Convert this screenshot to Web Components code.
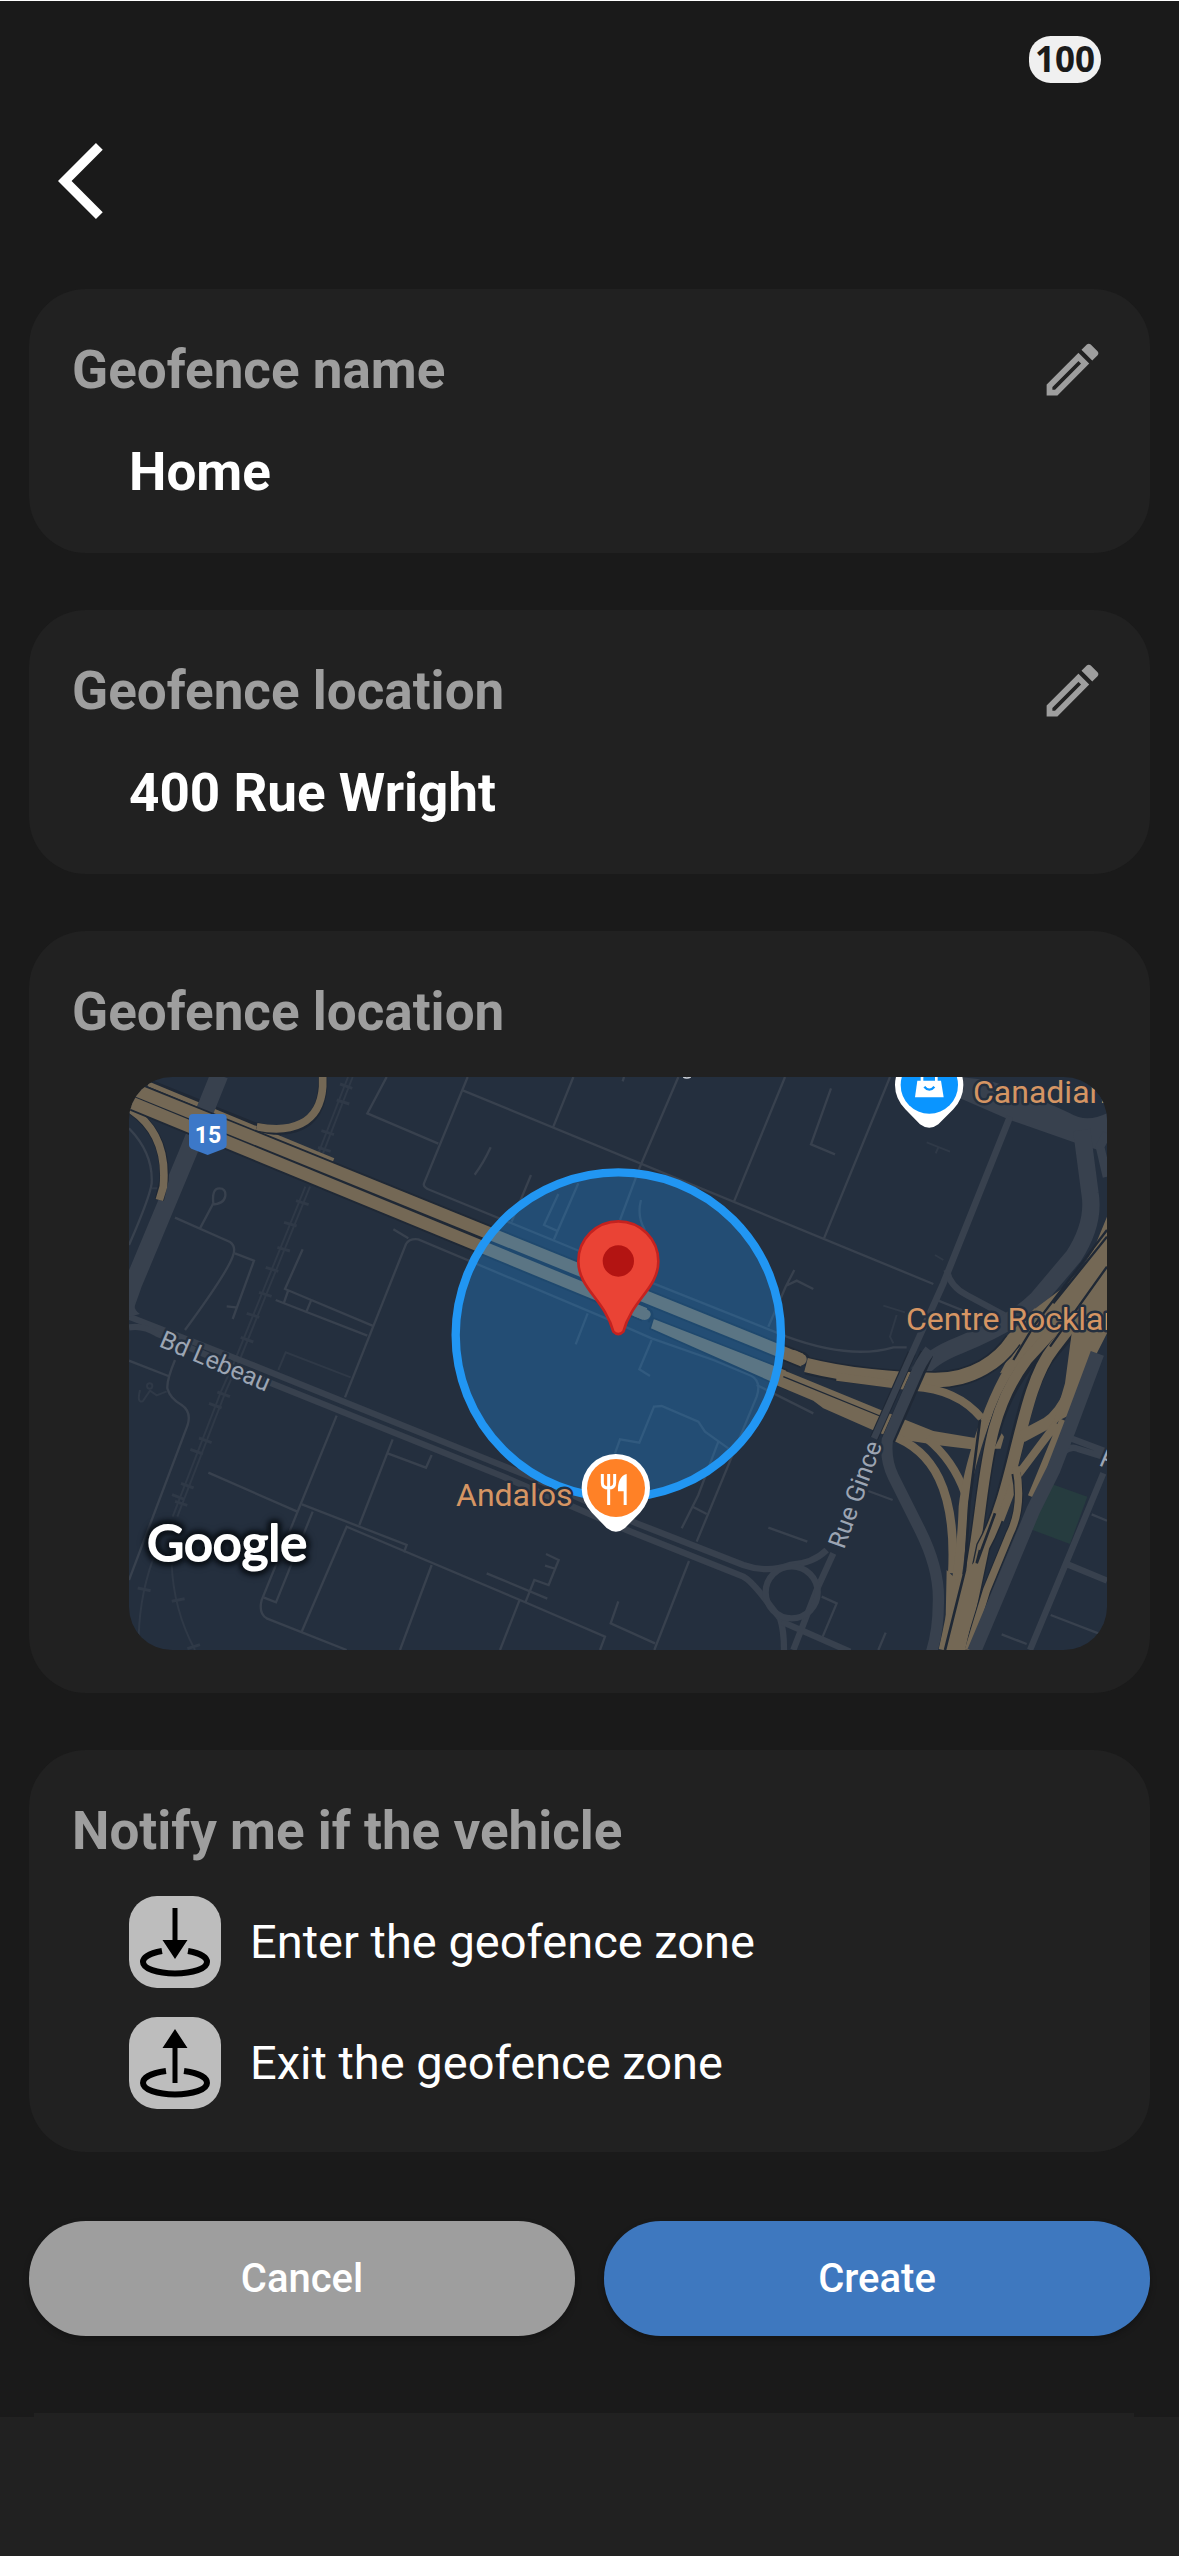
<!DOCTYPE html>
<html lang="en">
<head>
<meta charset="utf-8">
<meta name="viewport" content="width=device-width, initial-scale=1">
<title>Geofence</title>
<style>
  body {
    margin: 0;
    background: #1a1a1a;
    color: #fff;
    font-family: Roboto, "Liberation Sans", sans-serif;
  }
</style>
</head>
<body>
<geofence-page>
  <status-bar slot="status">100</status-bar>
  <back-button slot="header"></back-button>

  <info-card heading="Geofence name" editable>
    <card-value>Home</card-value>
  </info-card>
  <info-card heading="Geofence location" editable>
    <card-value>400 Rue Wright</card-value>
  </info-card>
  <info-card heading="Geofence location">
    <geofence-map></geofence-map>
  </info-card>
  <info-card heading="Notify me if the vehicle">
    <notify-option type="enter">Enter the geofence zone</notify-option>
    <notify-option type="exit">Exit the geofence zone</notify-option>
  </info-card>

  <action-button slot="actions">Cancel</action-button>
  <action-button slot="actions" primary>Create</action-button>
</geofence-page>

<script>
function define(name, html, setup) {
  const template = document.createElement('template');
  template.innerHTML = html;
  customElements.define(name, class extends HTMLElement {
    constructor() {
      super();
      this.attachShadow({mode: 'open'}).appendChild(template.content.cloneNode(true));
    }
    connectedCallback() {
      if (setup) setup(this, this.shadowRoot);
    }
  });
}

define('geofence-page', `
  <style>
    :host {
      display: flex;
      flex-direction: column;
      box-sizing: border-box;
      min-height: 100vh;
      border-top: 1px solid #fff;
    }
    header { padding: 52px 58px 62px; }
    main {
      display: flex;
      flex-direction: column;
      gap: 57px;
      padding: 0 29px;
    }
    .actions {
      display: flex;
      gap: 29px;
      padding: 69px 29px 77px;
    }
    footer {
      flex: 1;
      display: flex;
      flex-direction: column;
      min-height: 80px;
    }
    .lip { height: 4px; margin: 0 45px 0 34px; background: #212121; }
    .bar { flex: 1; background: #212121; }
  </style>
  <slot name="status"></slot>
  <header><slot name="header"></slot></header>
  <main><slot></slot></main>
  <div class="actions"><slot name="actions"></slot></div>
  <footer><div class="lip"></div><div class="bar"></div></footer>
`);

define('status-bar', `
  <style>
    :host {
      display: flex;
      justify-content: flex-end;
      padding: 35px 78px 0;
    }
    .battery {
      width: 72px;
      height: 47px;
      border-radius: 22px 24px 24px 22px;
      background: #f0f0f0;
      color: #1a1a1a;
      font: 700 35px/46px "Noto Sans", sans-serif;
      text-align: center;
    }
  </style>
  <div class="battery"><slot></slot></div>
`);

define('back-button', `
  <style>
    :host { display: block; }
    button { display: block; padding: 0; border: 0; background: none; color: inherit; }
    svg { display: block; width: 92px; height: 92px; fill: currentColor; }
  </style>
  <button aria-label="Back">
    <svg viewBox="0 0 24 24"><path d="M11.67 3.87L9.9 2.1 0 12l9.9 9.9 1.77-1.77L3.54 12z"/></svg>
  </button>
`);

define('info-card', `
  <style>
    :host {
      display: block;
      padding: 43px;
      border-radius: 57px;
      background: #212121;
    }
    .head {
      display: flex;
      align-items: center;
      justify-content: space-between;
      height: 75px;
      color: #9e9e9e;
    }
    h2 { margin: 0; font-size: 53px; line-height: 74px; font-weight: 700; }
    button { padding: 0; border: 0; background: none; color: inherit; }
    button[hidden] { display: none; }
    svg { display: block; width: 69px; height: 69px; fill: currentColor; }
    .content {
      display: flex;
      flex-direction: column;
      gap: 29px;
      padding: 28px 0 0 57px;
    }
  </style>
  <div class="head">
    <h2></h2>
    <button aria-label="Edit" hidden>
      <svg viewBox="0 0 24 24"><path d="M14.06 9.02l.92.92L5.92 19H5v-.92l9.06-9.06M17.66 3c-.25 0-.51.1-.7.29l-1.83 1.83 3.75 3.75 1.83-1.83c.39-.39.39-1.02 0-1.41l-2.34-2.34c-.2-.2-.45-.29-.71-.29zm-3.6 3.19L3 17.25V21h3.75L17.81 9.94l-3.75-3.75z"/></svg>
    </button>
  </div>
  <div class="content"><slot></slot></div>
`, (host, root) => {
  root.querySelector('h2').textContent = host.getAttribute('heading');
  root.querySelector('button').hidden = !host.hasAttribute('editable');
});

define('card-value', `
  <style>
    :host { display: block; height: 75px; font-size: 53px; line-height: 74px; font-weight: 700; }
  </style>
  <slot></slot>
`);

define('notify-option', `
  <style>
    :host { display: block; }
    button {
      display: flex;
      align-items: center;
      gap: 29px;
      padding: 0;
      border: 0;
      background: none;
      color: inherit;
      font: 400 47px/60px Roboto, "Liberation Sans", sans-serif;
    }
    svg { width: 92px; height: 92px; border-radius: 28px; background: #bdbdbd; }
    .exit, :host([type="exit"]) .enter { display: none; }
    :host([type="exit"]) .exit { display: inline; }
    .ring { fill: none; stroke: #000; stroke-width: 6; }
  </style>
  <button>
    <svg viewBox="0 0 92 92">
      <g class="enter">
        <path d="M43.5 12h5v32h10L46 63 33.5 44h10z"/>
        <path class="ring" d="M33 55C22 57 14 61 14 66C14 72.5 28 77.5 46 77.5S78 72.5 78 66C78 61 70 57 59 55"/>
      </g>
      <g class="exit">
        <path d="M46 12l12.5 19h-10v35h-5V31h-10z"/>
        <path class="ring" d="M37 54C23 56 14 60 14 66C14 72.5 28 77.5 46 77.5S78 72.5 78 66C78 60 69 56 55 54"/>
      </g>
    </svg>
    <span><slot></slot></span>
  </button>
`);

define('action-button', `
  <style>
    :host { display: block; flex: 1; }
    button {
      width: 100%;
      height: 115px;
      border: 0;
      border-radius: 57px;
      background: #9e9e9e;
      color: #fff;
      font: 500 40px/48px Roboto, "Liberation Sans", sans-serif;
      box-shadow: 0 3px 6px rgba(0, 0, 0, .25);
    }
    :host([primary]) button { background: #3e78bf; }
  </style>
  <button><slot></slot></button>
`);

define('geofence-map', `
  <style>
    :host {
      display: block;
      height: 573px;
      border-radius: 43px;
      overflow: hidden;
      background: #242f3e;
    }
    svg { display: block; width: 100%; height: 100%; }
    path, circle { fill: none; }
    .road { stroke: #38414e; }
    .minor { stroke: #38414e; stroke-width: 7; }
    .faint { stroke: #2f3947; stroke-width: 6; }
    .edge { stroke: #1f2835; }
    .highway { stroke: #746855; }
    .land { fill: #38414e; }
    .tan { fill: #746855; stroke: #1f2835; stroke-width: 5; }
    .white { fill: #fff; }
    text { font-family: Roboto, "Liberation Sans", sans-serif; paint-order: stroke; stroke: #242f3e; stroke-width: 5; stroke-linejoin: round; }
    .poi { font-size: 32px; fill: #d59563; }
    .street { font-size: 25px; fill: #9ca5b3; }
    .shield { font-size: 23px; font-weight: 700; fill: #fff; stroke: none; }
    .brand {
      font-family: Lato, sans-serif;
      font-size: 51px;
      font-weight: 400;
      fill: #fff;
      stroke: #fff;
      stroke-width: 2;
      filter: drop-shadow(0 0 2px #0e141b) drop-shadow(0 0 2px #0e141b) drop-shadow(0 0 2px #0e141b) drop-shadow(0 0 2px #0e141b);
    }
  </style>
  <svg viewBox="0 0 978 573" preserveAspectRatio="xMidYMid slice">
    <!-- streets are drawn on a grid three times finer than the labels -->
    <g transform="translate(-9 -7) scale(.333333)">
      <path style="fill:#263c3f" d="M2795 1242L2902 1280L2850 1422L2732 1378z"/>

      <!-- railway -->
      <path class="faint" d="M684 21L595 250M698 21L609 250M556 350L345 870L305 960L158 1340M570 350L359 870L319 960L172 1340M110 1440Q60 1560 56 1700M155 1480Q160 1620 225 1740"/>
      <path class="faint" style="stroke-width:9" d="M660 42L697 55M650 90L688 102M604 182L642 194M594 232L632 244M528 392L566 404M492 457L530 468M472 532L510 543M437 592L475 604M417 667L455 679M380 730L418 742M362 802L400 816M292 966L330 980M267 1000L305 1014M237 1104L275 1118M211 1138L249 1152M183 1240L221 1254M156 1274L194 1288M165 1294L202 1306M53 1554L92 1562M155 1594L194 1586M202 1736L240 1724"/>
      <path class="faint" d="M475 900L497 847L692 922M60 960Q50 1000 68 994L90 962L110 976L140 964M2290 707L2355 727M2330 735L2310 800L2320 820M2420 217L2490 245M2455 232L2447 250M2445 555L2470 570M95 355L120 355"/>
      <circle class="faint" cx="89" cy="948" r="8"/>

      <!-- small streets -->
      <path class="minor" d="M800 21L742 130L955 221M1043 21L912 340Q908 352 930 360L1400 552M1030 62L2440 642M1360 21L1300 170M1112 232Q1090 280 1064 314M1233 315L1175 455M1315 372L1272 465L1310 482M1375 340L1302 508"/>
      <path class="minor" d="M820 478L865 505M675 982L858 522Q868 505 895 508L1465 748L1595 805L1780 870L1895 918Q1925 935 1910 980L1730 1415M1403 730L1367 823M757 767L495 657L548 538M467 690L742 797M505 660L492 698M573 692L558 728"/>
      <path class="minor" d="M240 475L280 400Q275 355 298 355Q318 355 316 378Q312 403 275 403M165 443L330 516Q350 530 338 560Q320 610 195 780M345 550L402 572L338 747M320 709L348 712M27 175Q100 250 95 340Q90 380 27 525"/>
      <path class="minor" d="M27 872L145 918M165 870Q140 930 142 955Q150 985 185 1005Q215 1025 203 1065L27 1530M650 1037L425 1590Q415 1630 440 1645L680 1740M265 1208L532 1325M546 1303L860 1425L852 1447M578 1325L468 1597L432 1583M818 1108L718 1365M803 1150L918 1193L935 1155"/>
      <path class="minor" d="M545 1685L680 1370L1200 1590L1455 1700L1440 1740M935 1485L840 1740M1198 1592L1140 1740M1100 1510L1282 1586M1278 1452L1316 1470L1286 1545L1243 1530L1217 1595M1275 1487L1308 1497M1495 1594L1472 1660L1605 1720M1707 1473L1603 1740"/>
      <path class="minor" d="M1675 21L1560 290L1500 450M1995 21L1842 395M2310 21L2112 505M2133 55L2073 223L2145 253M2023 600L1997 650L1945 770M1997 648L2030 632L2080 657M1600 640L2000 800Q2190 870 2320 832L2360 832M1563 390Q1550 440 1575 480M1595 810L1558 898L1590 918M1512 21L1508 34"/>
      <path class="minor" d="M1910 945L2080 1030M1485 1150L1500 1108L1558 1118L1602 1010L1625 1008L1735 1055L1755 1085L1825 1135M1795 1115L1735 1275L1685 1375M1718 1310L1760 1332M1945 1373L2062 1415M2245 1263L2318 1290M2105 1580L2150 1600L2108 1700M2297 1688L2275 1740M2915 1333L2961 1352M2792 1635L2935 1690M2645 1693L2720 1722"/>

      <!-- boulevards and the roundabout -->
      <g class="road" stroke-width="19">
        <path d="M27 740L385 880L1230 1220L1550 1360L1870 1485Q1940 1510 2010 1485Q2080 1480 2120 1440"/>
        <path d="M27 772Q70 765 110 790L455 940L1150 1220L1520 1380L1870 1520Q1890 1530 1930 1580L1980 1645Q1992 1680 1992 1740"/>
        <path d="M2140 1450L2090 1560L2020 1740M1985 1655L2190 1745"/>
        <circle cx="2015" cy="1567" r="78"/>
        <path d="M2950 1210L2730 1740M2840 1482L2961 1532M2840 1100L2961 1146M2800 1180Q2840 1120 2875 1137L2950 1160"/>
        <path d="M2480 600Q2490 650 2540 675L2670 745"/>
      </g>
      <path class="minor" d="M2455 692L2600 750"/>
      <path class="land" d="M2520 21L2600 30L2700 60L2850 130Q2900 160 2961 130V215L2935 240L2870 220L2670 150L2520 85z"/>

      <path class="edge" stroke-width="26" d="M85 40L240 102M285 122L480 200"/>
      <path class="highway" stroke-width="15" d="M85 42L640 272"/>
      <path class="road" stroke-width="54" d="M298 15L205 245L40 640L15 710"/>
      <path class="land" d="M27 690L48 690Q35 715 60 732L27 740z"/>

      <!-- autoroute 15 -->
      <path class="edge" stroke-width="28" d="M27 115Q140 190 132 330L118 390M608 15V50C600 180 500 195 410 170"/>
      <path class="highway" stroke-width="23" d="M27 115Q145 190 130 350L118 390M608 15V50C600 165 510 190 410 170"/>
      <path class="edge" stroke-width="48" d="M20 49L2050 872M20 92L1575 732"/>
      <path class="highway" stroke-width="37" d="M20 49L2050 872"/>
      <path class="highway" stroke-width="37" d="M20 92L1575 732" />
      <path class="tan" d="M1600 744L2000 900V958L1590 776z"/>
      <path class="highway" stroke-width="36" stroke-linecap="round" d="M1550 722L1574 732M2020 858L2042 868"/>
      <path class="edge" stroke-width="7" d="M1582 715Q1610 730 1585 756M2052 850Q2080 865 2055 888"/>

      <!-- interchange -->
      <path class="road" stroke-width="52" d="M2395 910Q2430 860 2520 825Q2680 760 2750 690L2860 560Q2925 460 2910 370L2885 180"/>
      <path class="road" stroke-width="26" d="M2961 190L2940 230L2961 320"/>
      <path style="fill:#746855" d="M1960 888L2290 1023L2440 1083L2570 1105L2555 1138L2450 1125L2320 1105L2270 1085L2110 1015L2080 992L1955 940z"/>
      <path class="edge" stroke-width="4" d="M1990 920L2280 1038"/>
      <path style="fill:#746855" d="M2740 720L2820 660L2880 600L2920 540L2961 440V640L2860 800L2790 870L2640 910z"/>
      <g class="edge">
        <path stroke-width="54" d="M2060 887C2180 915 2330 930 2440 930C2560 932 2640 870 2680 810"/>
      </g>
      <g class="highway">
        <path stroke-width="44" d="M2058 885C2180 916 2330 930 2440 930C2560 932 2640 870 2680 810L2760 730"/>
        <path stroke-width="24" d="M2150 920L2380 950C2470 955 2540 990 2585 1045"/>
        <path stroke-width="26" d="M2310 1095C2440 1140 2510 1260 2497 1510"/>
        <path stroke-width="24" d="M2420 1105Q2500 1170 2535 1270"/>
        <path stroke-width="28" d="M2760 780L2700 850C2600 980 2540 1220 2530 1310Q2525 1500 2470 1740"/>
      </g>
      <path class="edge" stroke-width="40" d="M2820 780L2730 870C2600 1030 2600 1200 2565 1430L2515 1740"/>
      <path class="highway" stroke-width="32" d="M2820 760L2720 870C2600 1030 2600 1200 2565 1430L2515 1740"/>
      <path class="edge" stroke-width="44" d="M2860 770L2800 840C2690 960 2690 1250 2590 1430L2525 1740"/>
      <path class="highway" stroke-width="36" d="M2965 620L2800 835C2700 960 2690 1250 2590 1430L2525 1740"/>
      <path class="highway" stroke-width="36" d="M2890 810Q2860 1010 2780 1060L2705 1100"/>
      <path style="fill:#746855" d="M2961 600V790L2905 900L2860 1030L2800 1060L2835 940L2855 790z"/>
      <path class="edge" stroke-width="7" d="M2961 480L2740 770L2680 870M2961 590L2790 830M2961 500L2800 700"/>
      <path class="highway" stroke-width="24" d="M2810 1060L2690 1220L2640 1350M2830 1050L2735 1280"/>
      <path class="edge" stroke-width="28" d="M2688 1210Q2710 1310 2670 1390L2600 1560L2545 1740"/>
      <path class="highway" stroke-width="22" d="M2688 1190Q2710 1310 2670 1390L2600 1560L2545 1740"/>
      <path style="fill:#746855" d="M2480 1500L2510 1530L2560 1480L2600 1420L2575 1560L2535 1740H2475z"/>
      <path class="edge" stroke-width="8" d="M2580 1050L2548 1300L2535 1500L2475 1740M2625 1330L2570 1480L2580 1440"/>
      <path style="fill:#746855" d="M2645 1090L2652 1100L2642 1136H2622z"/>

      <!-- roads passing over the highway -->
      <path class="edge" stroke-width="42" d="M2420 850L2305 1110"/>
      <path class="edge" stroke-width="26" d="M2375 850L2262 1105"/>
      <path class="road" stroke-width="20" d="M2262 1105L2360 885L2470 640L2670 140"/>
      <path class="road" stroke-width="34" d="M2430 840Q2400 880 2385 920L2302 1110Q2295 1170 2320 1220L2400 1380Q2460 1500 2455 1600Q2455 1680 2435 1745"/>
      <path class="road" stroke-width="42" d="M2932 850L2850 1070L2800 1200L2740 1320L2640 1560L2562 1745"/>

      <!-- fence -->
      <circle cx="1495" cy="795" r="488" stroke="#2196f3" stroke-width="25" style="fill:rgba(33,150,243,.3)"/>
      <path stroke="#c5221f" stroke-width="8" style="fill:#ea4335" d="M1495 454A120 120 0 0 1 1615 574C1615 655 1535 690 1510 785Q1495 800 1480 785C1455 690 1375 655 1375 574A120 120 0 0 1 1495 454z"/>
      <circle cx="1495" cy="573" r="47" style="fill:#b31412"/>

      <!-- shop -->
      <path class="white" d="M2428 -57A102 102 0 0 1 2530 45Q2530 85 2500 118L2455 163Q2428 184 2400 163L2356 118Q2325 85 2325 45A102 102 0 0 1 2428 -57z"/>
      <circle cx="2428" cy="45" r="86" style="fill:#0a95ff"/>
      <path class="white" d="M2392 32H2463L2471 82H2385z"/>
      <path stroke="#fff" stroke-width="8" d="M2406 36V20Q2428 0 2449 20V36"/>
      <path stroke="#0a95ff" stroke-width="7" d="M2413 50Q2428 68 2443 50"/>

      <!-- restaurant -->
      <path class="white" d="M1488 1152A102 102 0 0 1 1590 1255Q1590 1295 1560 1328L1515 1374Q1488 1396 1460 1374L1416 1328Q1385 1295 1385 1255A102 102 0 0 1 1488 1152z"/>
      <circle cx="1488" cy="1254" r="87" style="fill:#ff8126"/>
      <path stroke="#fff" stroke-width="9" d="M1447 1212V1238Q1447 1254 1466 1254Q1484 1254 1484 1238V1212M1466 1212V1305"/>
      <path class="white" d="M1520 1212V1305H1511V1264H1494Q1492 1220 1520 1212z"/>

      <path style="fill:#3c78c8" d="M219 132H307Q320 132 320 145V225Q320 232 312 236L263 255L214 236Q207 232 207 225V145Q207 132 219 132z"/>
      <path stroke="#c9ced6" stroke-width="5" d="M1690 21Q1700 27 1712 21"/>
    </g>

    <text class="shield" x="79" y="66" text-anchor="middle">15</text>
    <text class="poi" x="844" y="26">Canadian</text>
    <text class="poi" x="777" y="253">Centre Rockland</text>
    <text class="poi" x="327" y="429">Andalos</text>
    <text class="street" transform="translate(29 269) rotate(23)">Bd Lebeau</text>
    <text class="street" transform="translate(715 473) rotate(-70)">Rue Gince</text>
    <text class="street" transform="translate(969 388) rotate(23)">R</text>
    <text class="brand" x="18" y="484">Google</text>
  </svg>
`);
</script>
</body>
</html>
